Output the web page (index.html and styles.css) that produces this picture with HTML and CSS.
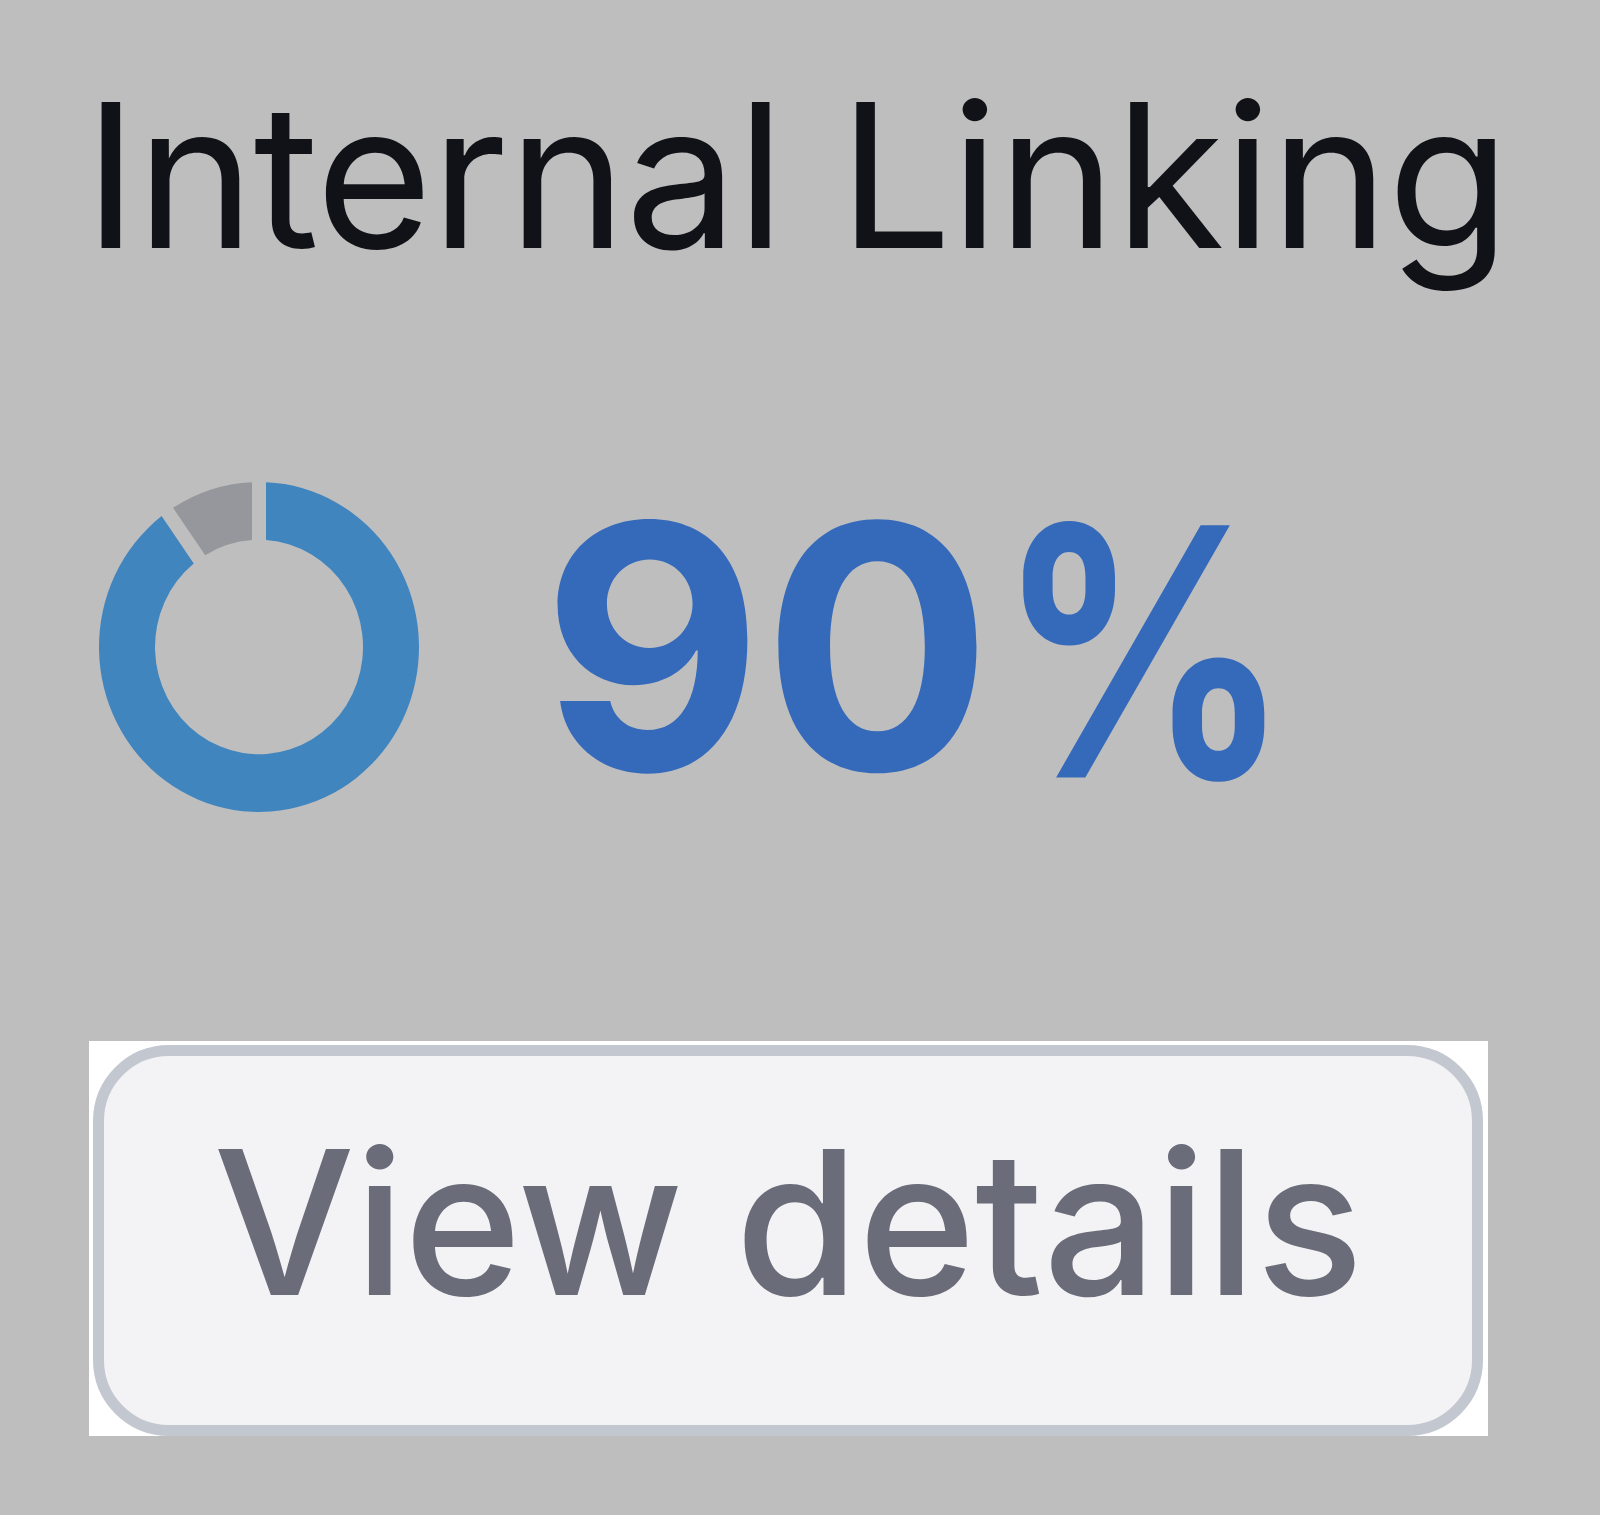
FILE: index.html
```html
<!DOCTYPE html>
<html lang="en">

<head>
  <meta charset="UTF-8">
  <meta name="viewport" content="width=device-width, initial-scale=1.0">
  <title>Internal Linking</title>
  <link rel="stylesheet" href="styles.css">
</head>

<body>

  <div class="card">
    <h2 class="card-title">Internal Linking</h2>

    <div class="score">
      <svg class="donut" viewBox="-160 -160 320 320" preserveAspectRatio="none" aria-hidden="true">
        <path class="donut-fill" d="M 7 -159.85 A 160 160 0 1 1 -97.42 -126.93 L -65.25 -80.98 A 104 104 0 1 0 7 -103.76 Z" />
        <path class="donut-rest" d="M -85.96 -134.97 A 160 160 0 0 1 -7 -159.85 L -7 -103.76 A 104 104 0 0 0 -53.79 -89.02 Z" />
      </svg>
      <span class="score-value">90<span class="score-unit">%</span></span>
    </div>

    <div class="actions">
      <button class="btn">View details</button>
    </div>
  </div>

</body>

</html>
```

FILE: styles.css
```css
* {
  box-sizing: border-box;
  margin: 0;
  padding: 0;
  font-family: 'Inter', 'Liberation Sans', sans-serif;
}

body {
  background: #bebebe;
  min-height: 100vh;
}

.card {
  padding: 75px 0 0 89px;
}

.card-title {
  font-size: 200px;
  font-weight: 400;
  line-height: 1;
  letter-spacing: -1.2px;
  color: #111217;
  margin-left: -5px;
}

.score {
  display: flex;
  align-items: center;
  gap: 123px;
  margin-top: 202px;
  margin-left: 10px;
  height: 340px;
}

.donut {
  width: 320px;
  height: 330px;
  flex-shrink: 0;
}

.donut-fill {
  fill: #4185bf;
}

.donut-rest {
  fill: #96979c;
}

.score-value {
  font-size: 340px;
  font-weight: 700;
  line-height: 1;
  color: #356abb;
}

.score-unit {
  display: inline-block;
  margin-left: 5px;
  transform: translateY(5px) scale(0.85, 1.02);
  transform-origin: left center;
}

.actions {
  margin-top: 224px;
  width: 1399px;
  height: 395px;
  background: #fff;
  padding: 4px 5px 0 4px;
}

.btn {
  width: 100%;
  height: 100%;
  border: 11px solid #c3c7d0;
  border-radius: 76px;
  background: #f3f3f5;
  color: #6a6d79;
  font-size: 200px;
  font-weight: 500;
  line-height: 1;
  letter-spacing: -0.7px;
  padding-top: 66px;
  display: flex;
  justify-content: center;
  align-items: flex-start;
  cursor: pointer;
}
```
